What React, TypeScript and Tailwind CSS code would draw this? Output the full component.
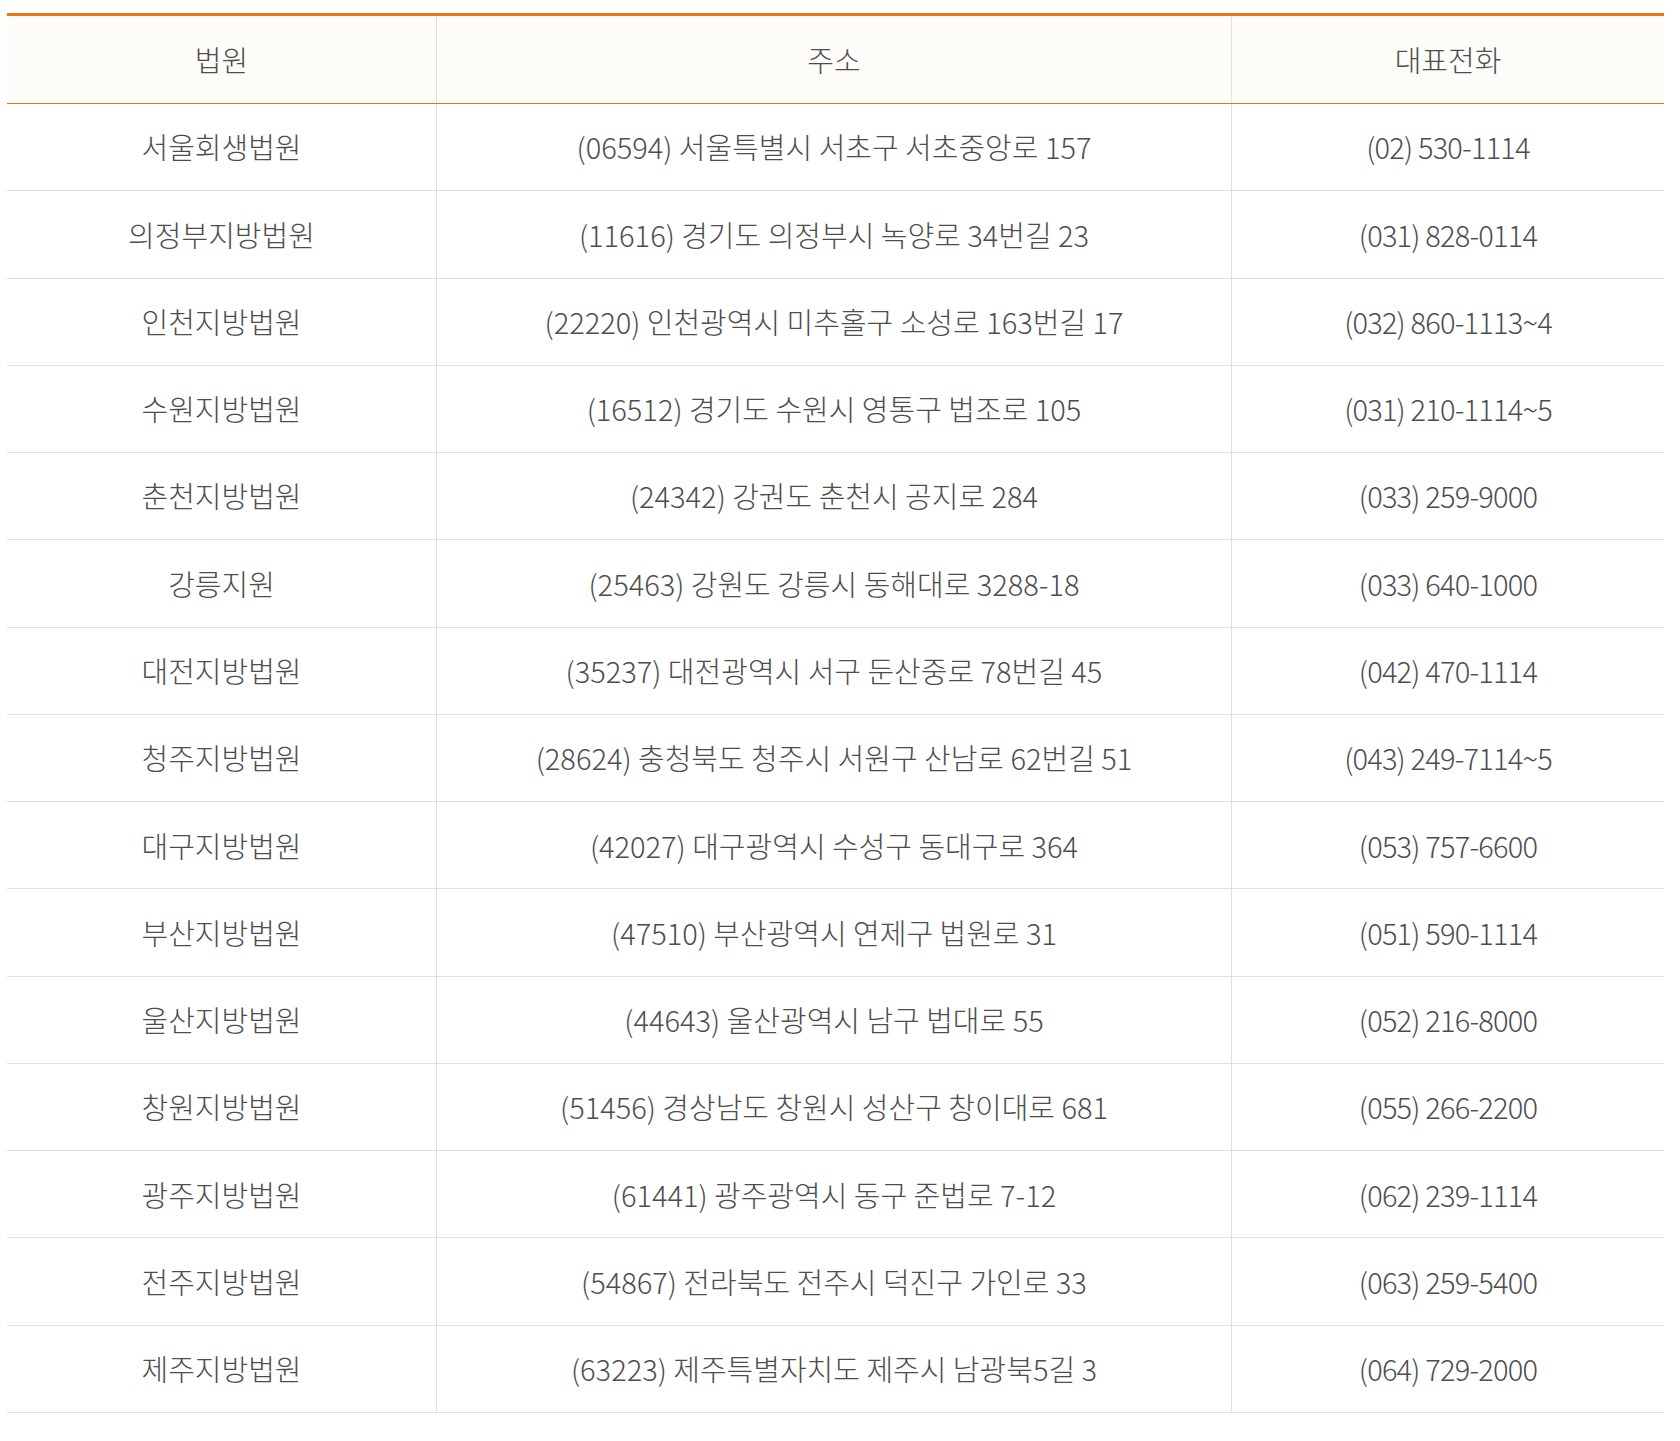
import React from 'react';

type Court = { name: string; address: string; phone: string };

const courts: Court[] = [
    { name: '서울회생법원', address: '(06594) 서울특별시 서초구 서초중앙로 157', phone: '(02) 530-1114' },
    { name: '의정부지방법원', address: '(11616) 경기도 의정부시 녹양로 34번길 23', phone: '(031) 828-0114' },
    { name: '인천지방법원', address: '(22220) 인천광역시 미추홀구 소성로 163번길 17', phone: '(032) 860-1113~4' },
    { name: '수원지방법원', address: '(16512) 경기도 수원시 영통구 법조로 105', phone: '(031) 210-1114~5' },
    { name: '춘천지방법원', address: '(24342) 강권도 춘천시 공지로 284', phone: '(033) 259-9000' },
    { name: '강릉지원', address: '(25463) 강원도 강릉시 동해대로 3288-18', phone: '(033) 640-1000' },
    { name: '대전지방법원', address: '(35237) 대전광역시 서구 둔산중로 78번길 45', phone: '(042) 470-1114' },
    { name: '청주지방법원', address: '(28624) 충청북도 청주시 서원구 산남로 62번길 51', phone: '(043) 249-7114~5' },
    { name: '대구지방법원', address: '(42027) 대구광역시 수성구 동대구로 364', phone: '(053) 757-6600' },
    { name: '부산지방법원', address: '(47510) 부산광역시 연제구 법원로 31', phone: '(051) 590-1114' },
    { name: '울산지방법원', address: '(44643) 울산광역시 남구 법대로 55', phone: '(052) 216-8000' },
    { name: '창원지방법원', address: '(51456) 경상남도 창원시 성산구 창이대로 681', phone: '(055) 266-2200' },
    { name: '광주지방법원', address: '(61441) 광주광역시 동구 준법로 7-12', phone: '(062) 239-1114' },
    { name: '전주지방법원', address: '(54867) 전라북도 전주시 덕진구 가인로 33', phone: '(063) 259-5400' },
    { name: '제주지방법원', address: '(63223) 제주특별자치도 제주시 남광북5길 3', phone: '(064) 729-2000' },
];

const App: React.FC = () => {
    return (
        <div className="min-h-[1441px] bg-white pt-[13px] pl-[7px] font-['Noto_Sans_CJK_KR',sans-serif] text-[29px] font-light text-[#4d4d4d]">
            <div className="w-[1657px]">
                {/* Header */}
                <div className="grid h-[91px] grid-cols-[430px_795px_432px] border-t-[3px] border-b border-[#e57714] bg-[#fdfcf8]">
                    <div className="flex items-center justify-center border-r border-[#e0e0e0]">법원</div>
                    <div className="flex items-center justify-center border-r border-[#e0e0e0]">주소</div>
                    <div className="flex items-center justify-center">대표전화</div>
                </div>

                {/* Rows */}
                {courts.map((c) => (
                    <div key={c.name} className="grid h-[87.27px] grid-cols-[430px_795px_432px] border-b border-[#e0e0e0]">
                        <div className="flex items-center justify-center border-r border-[#e0e0e0]">{c.name}</div>
                        <div className="flex items-center justify-center border-r border-[#e0e0e0]">{c.address}</div>
                        <div className="flex items-center justify-center tracking-[-0.8px]">{c.phone}</div>
                    </div>
                ))}
            </div>
        </div>
    );
};

export default App;
